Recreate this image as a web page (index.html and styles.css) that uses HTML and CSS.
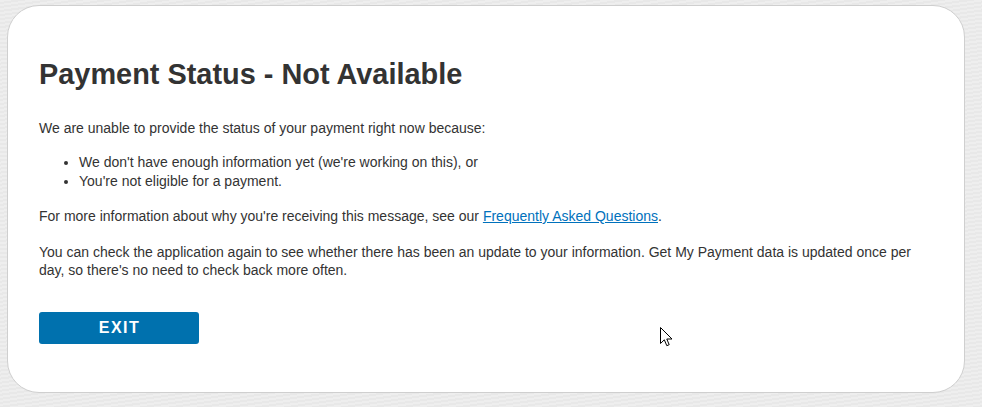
FILE: index.html
```html
<!DOCTYPE html>
<html lang="en">
<head>
<meta charset="utf-8">
<title>Payment Status - Not Available</title>
<link rel="stylesheet" href="styles.css">
</head>
<body>
<div class="page">
  <main class="card">
    <h1 class="title">Payment Status - Not Available</h1>
    <p class="intro">We are unable to provide the status of your payment right now because:</p>
    <ul class="reasons">
      <li>We don't have enough information yet (we're working on this), or</li>
      <li>You're not eligible for a payment.</li>
    </ul>
    <p class="faq">For more information about why you're receiving this message, see our <a href="#" class="link">Frequently Asked Questions</a>.</p>
    <p class="note">You can check the application again to see whether there has been an update to your information. Get My Payment data is updated once per day, so there's no need to check back more often.</p>
    <button class="exit" type="button">EXIT</button>
  </main>
</div>
<svg class="cursor" width="13" height="21" viewBox="0 0 13 21" aria-hidden="true">
  <path d="M0.5 0.5 L0.5 16.5 L4.3 12.8 L6.8 18.7 L9.2 17.7 L6.8 12 L12 12 Z" fill="#fff" stroke="#000" stroke-width="1" stroke-linejoin="miter"/>
</svg>
</body>
</html>
```
FILE: styles.css
```css
html, body {
  margin: 0;
  padding: 0;
}
body {
  background-color: #ececec;
  background-image: repeating-linear-gradient(172deg, #eeeeee 0px, #eeeeee 2px, #e8e8e8 2px, #e8e8e8 4px);
  font-family: "Liberation Sans", Arial, sans-serif;
  color: #333333;
  font-size: 14px;
  line-height: 18px;
  width: 982px;
  height: 407px;
  overflow: hidden;
}
.page {
  padding: 5px 17px 15px 7px;
}
.card {
  background: #ffffff;
  border: 1px solid #cfcfcf;
  border-radius: 32px;
  padding: 52px 31px 48px 31px;
  display: flex;
  flex-direction: column;
  align-items: flex-start;
}
.title {
  margin: 0 0 29px 0;
  font-size: 28.9px;
  line-height: 32px;
  font-weight: bold;
  color: #333333;
}
.intro {
  margin: 0 0 15px 0;
}
.reasons {
  margin: 0 0 14px 0;
  padding-left: 40px;
}
.reasons li {
  line-height: 20px;
}
.reasons li + li {
  margin-top: -1px;
}
.faq {
  margin: 2px 0 18px 0;
}
.link {
  color: #0071bc;
  text-decoration: underline;
}
.note {
  margin: 0 0 33px 0;
  max-width: 890px;
}
.exit {
  width: 160px;
  height: 32px;
  background: #0071ae;
  color: #ffffff;
  border: none;
  border-radius: 3px;
  font-family: "Liberation Sans", Arial, sans-serif;
  font-weight: bold;
  font-size: 16px;
  letter-spacing: 1.5px;
  padding: 0 0 0 1px;
  cursor: pointer;
}
.cursor {
  position: absolute;
  left: 660px;
  top: 327px;
}
```
